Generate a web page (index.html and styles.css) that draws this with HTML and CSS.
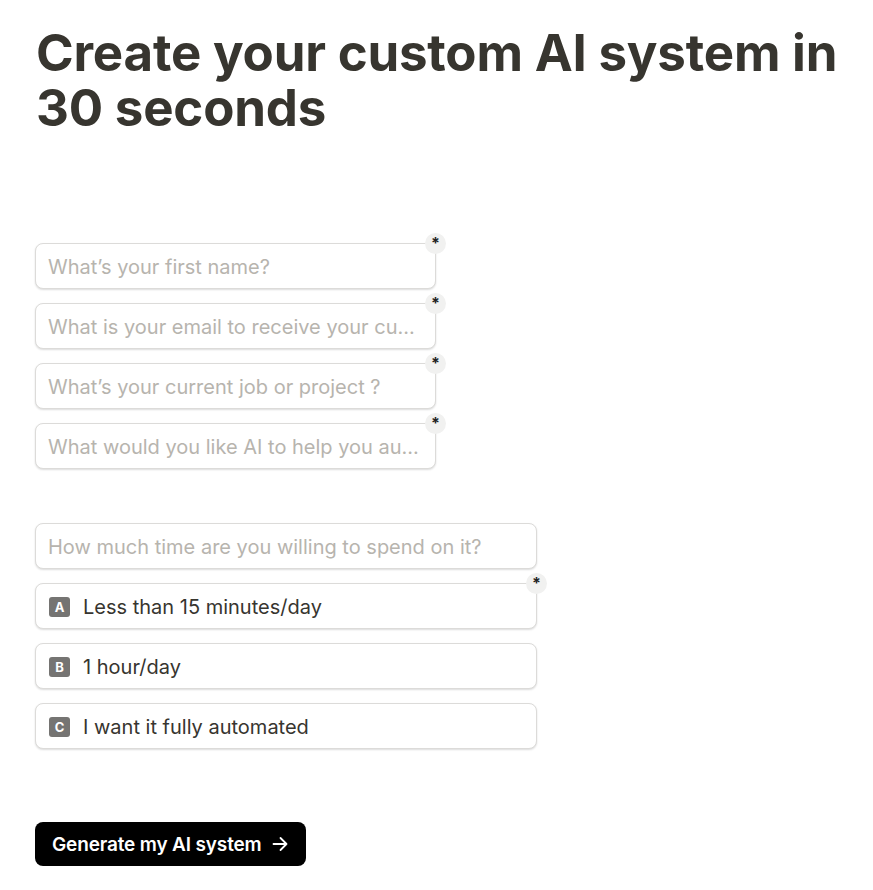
FILE: index.html
```html
<!DOCTYPE html>
<html>
<head>
<meta charset="utf-8">
<link rel="stylesheet" href="styles.css">
</head>
<body>
<main class="page">
  <h1 class="title">Create your custom AI system in 30 seconds</h1>
  <form class="form">
    <div class="group">
      <div class="field"><div class="box placeholder">What’s your first name?</div><span class="req">*</span></div>
      <div class="field"><div class="box placeholder">What is your email to receive your cu...</div><span class="req">*</span></div>
      <div class="field"><div class="box placeholder">What’s your current job or project ?</div><span class="req">*</span></div>
      <div class="field"><div class="box placeholder">What would you like AI to help you au...</div><span class="req">*</span></div>
    </div>
    <div class="group wide">
      <div class="field"><div class="box placeholder">How much time are you willing to spend on it?</div></div>
      <div class="field"><div class="box option"><span class="key">A</span>Less than 15 minutes/day</div><span class="req">*</span></div>
      <div class="field"><div class="box option"><span class="key">B</span>1 hour/day</div></div>
      <div class="field"><div class="box option"><span class="key">C</span>I want it fully automated</div></div>
    </div>
    <button type="button" class="submit"><span class="label">Generate my AI system</span>
      <svg class="arrow" width="18" height="18" viewBox="0 0 18 18" fill="none" stroke="currentColor" stroke-width="1.8" stroke-linecap="round" stroke-linejoin="round"><path d="M2.5 9h13M9.5 3l6 6-6 6"/></svg>
    </button>
  </form>
</main>
</body>
</html>
```
FILE: styles.css
```css
html, body { margin: 0; padding: 0; background: #fff; }
body { font-family: Inter, "Noto Sans", sans-serif; color: #37352f; }
.page { padding: 25px 35px 0 35px; }
.title {
  margin: 0 0 0 1px;
  font-size: 51px;
  line-height: 55px;
  font-weight: 700;
  letter-spacing: -0.2px;
  color: #37352f;
  max-width: 830px;
}
.form { margin-top: 108px; display: flex; flex-direction: column; }
.group { display: flex; flex-direction: column; gap: 14px; width: 401px; }
.group.wide { width: 502px; margin-top: 54px; }
.field { position: relative; }
.box {
  box-sizing: border-box;
  height: 46px;
  border: 1px solid #dcdbd9;
  border-radius: 8px;
  box-shadow: 0 1px 2px rgba(0,0,0,0.14);
  padding: 1px 12px 0 12px;
  display: flex;
  align-items: center;
  font-size: 20px;
  white-space: nowrap;
  overflow: hidden;
  background: #fff;
}
.placeholder { color: #b7b4ae; }
.option { color: #37352f; }
.key {
  width: 21px; height: 20px;
  flex: none;
  border-radius: 3px;
  background: #757472;
  color: #fff;
  font-size: 13px;
  font-weight: 700;
  display: inline-flex; align-items: center; justify-content: center;
  margin: 0 13px 0 1px;
}
.req {
  position: absolute;
  top: -10px; right: -10px;
  width: 21px; height: 21px;
  border-radius: 50%;
  background: #f1f1f0;
  color: #222;
  font-size: 16px;
  font-weight: 700;
  display: flex; align-items: flex-start; justify-content: center;
  line-height: 21px;
}
.submit {
  margin-top: 73px;
  align-self: flex-start;
  height: 44px;
  box-sizing: border-box;
  background: #000;
  color: #fff;
  border: none;
  border-radius: 8px;
  padding: 0 17px 0 17px;
  font-family: Inter, "Noto Sans", sans-serif;
  font-size: 19px;
  font-weight: 600;
  display: flex; align-items: center; gap: 9px;
  letter-spacing: -0.15px;
  white-space: nowrap;
}
.label { white-space: nowrap; }
.arrow { display: block; flex: none; }
```
